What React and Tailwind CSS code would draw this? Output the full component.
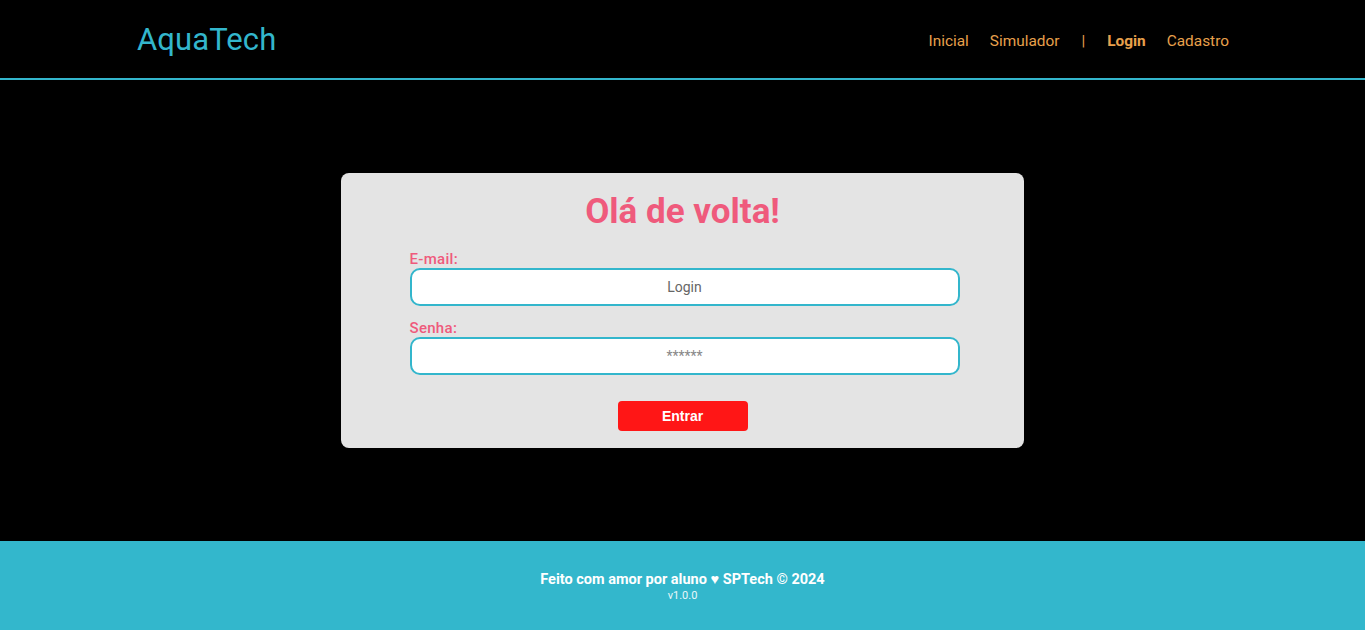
import React from "react";

const font = { fontFamily: "Roboto, 'Noto Sans', sans-serif" };

export default function App() {
  return (
    <div className="min-h-screen flex flex-col bg-black" style={font}>
      {/* HEADER */}
      <header className="h-[80px] border-b-2 border-[#33b6cc] flex items-center justify-between px-[136px]">
        <h1 className="text-[31px] text-[#33b6cc] leading-none tracking-[0.1px] pl-[1px]">AquaTech</h1>
        <nav className="flex items-center gap-[21px] text-[15.4px] text-[#e8a04c] pt-[5px]">
          <a>Inicial</a>
          <a>Simulador</a>
          <span className="px-[1px]">|</span>
          <a className="font-bold">Login</a>
          <a>Cadastro</a>
        </nav>
      </header>

      {/* MAIN */}
      <main className="h-[461px] flex items-center justify-center">
        <div className="w-[683px] h-[275px] bg-[#e4e4e4] rounded-[8px] flex flex-col items-center pt-[17px]">
          <h2 className="text-[35px] font-bold text-[#ef5a7c] leading-[44px]">Olá de volta!</h2>
          <div className="w-[550px] mt-[16px] ml-[4px] flex flex-col">
            <label className="text-[15px] font-medium text-[#ef5a7c] leading-[18px] tracking-[0.3px]">E-mail:</label>
            <input
              placeholder="Login"
              className="h-[38px] rounded-[10px] border-2 border-[#33b6cc] bg-white text-center text-[14px] placeholder:text-[#666]"
            />
            <label className="mt-[13px] text-[15px] font-medium text-[#ef5a7c] leading-[18px] tracking-[0.3px]">Senha:</label>
            <input
              placeholder="******"
              className="h-[38px] rounded-[10px] border-2 border-[#33b6cc] bg-white text-center text-[14px] placeholder:text-[#888]"
            />
          </div>
          <button
            className="mt-[26px] w-[130px] h-[30px] rounded-[4px] bg-[#ff1616] text-white text-[14px] font-bold"
            style={{ fontFamily: "'Liberation Sans', Arial, sans-serif" }}
          >
            Entrar
          </button>
        </div>
      </main>

      {/* FOOTER */}
      <footer className="h-[89px] bg-[#33b7cc] flex flex-col items-center justify-center text-white pt-[2px]">
        <p className="text-[14.5px] font-bold leading-[18px]">Feito com amor por aluno ♥ SPTech © 2024</p>
        <p className="text-[11px] leading-[14px] text-[#eaf7fa]">v1.0.0</p>
      </footer>
    </div>
  );
}
